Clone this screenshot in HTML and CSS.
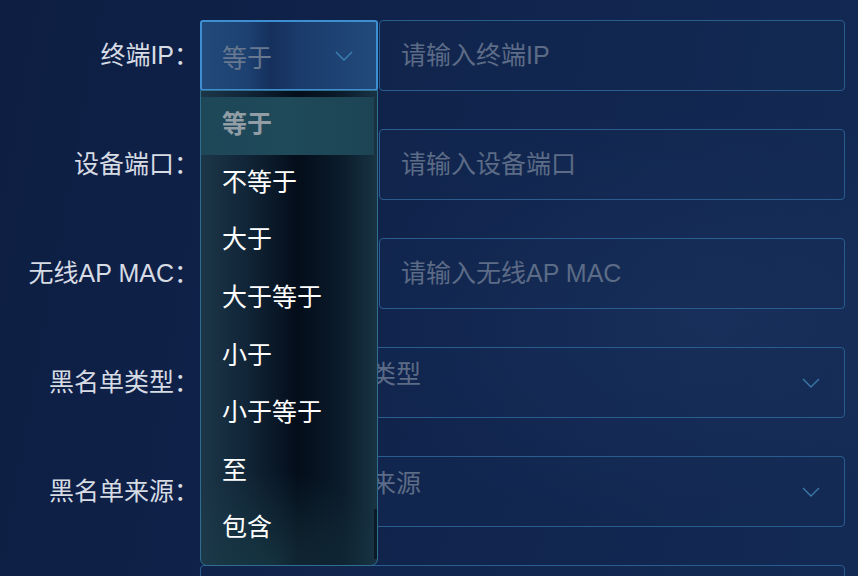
FILE: index.html
```html
<!DOCTYPE html>
<html lang="zh-CN">
<head>
<meta charset="utf-8">
<title>筛选</title>
<link rel="stylesheet" href="styles.css">
</head>
<body>
<form class="form">
  <div class="row">
    <label class="label">终端IP：</label>
    <div class="field">
      <div class="op-select focused">
        <span class="op-value">等于</span>
        <svg class="chev" width="18" height="10" viewBox="0 0 18 10"><path d="M1 1 L9 9 L17 1" fill="none" stroke="currentColor" stroke-width="1.4"/></svg>
        <div class="dropdown">
          <ul class="options">
            <li class="opt active">等于</li>
            <li class="opt">不等于</li>
            <li class="opt">大于</li>
            <li class="opt">大于等于</li>
            <li class="opt">小于</li>
            <li class="opt">小于等于</li>
            <li class="opt">至</li>
            <li class="opt">包含</li>
          </ul>
          <div class="scrollbar"><div class="thumb"></div></div>
        </div>
      </div>
      <div class="input"><span class="ph">请输入终端IP</span></div>
    </div>
  </div>
  <div class="row">
    <label class="label">设备端口：</label>
    <div class="field">
      <div class="op-select"></div>
      <div class="input"><span class="ph">请输入设备端口</span></div>
    </div>
  </div>
  <div class="row">
    <label class="label">无线AP MAC：</label>
    <div class="field">
      <div class="op-select"></div>
      <div class="input"><span class="ph">请输入无线AP MAC</span></div>
    </div>
  </div>
  <div class="row">
    <label class="label">黑名单类型：</label>
    <div class="field">
      <div class="select">
        <span class="ph ph-multi">请选择黑名单类型</span>
        <svg class="chev" width="18" height="10" viewBox="0 0 18 10"><path d="M1 1 L9 9 L17 1" fill="none" stroke="currentColor" stroke-width="1.4"/></svg>
      </div>
    </div>
  </div>
  <div class="row">
    <label class="label">黑名单来源：</label>
    <div class="field">
      <div class="select">
        <span class="ph ph-multi">请选择黑名单来源</span>
        <svg class="chev" width="18" height="10" viewBox="0 0 18 10"><path d="M1 1 L9 9 L17 1" fill="none" stroke="currentColor" stroke-width="1.4"/></svg>
      </div>
    </div>
  </div>
  <div class="row">
    <span class="label"></span>
    <div class="field"><div class="input"></div></div>
  </div>
</form>
</body>
</html>
```

FILE: styles.css
```css
* { box-sizing: border-box; }
html, body { margin: 0; }
body {
  width: 858px;
  height: 576px;
  overflow: hidden;
  font-family: "Liberation Sans", "Noto Sans CJK SC", sans-serif;
  font-size: 25px;
  line-height: 1.2;
  background:
    radial-gradient(ellipse 500px 300px at 700px 320px, rgba(40, 70, 120, 0.25), transparent 70%),
    linear-gradient(100deg, #0d1e42 0%, #10234b 45%, #132a54 100%);
  color: #d5dae3;
}
.form {
  height: 576px;
  overflow: hidden;
  padding-top: 20px;
  display: flex;
  flex-direction: column;
  gap: 38px;
}
.row {
  display: grid;
  grid-template-columns: 200px 645px;
  height: 71px;
  flex: none;
  align-items: center;
}
.label {
  text-align: right;
  padding-right: 1px;
  padding-bottom: 1px;
  color: #d6dbe4;
  white-space: nowrap;
}
.field {
  height: 71px;
  display: flex;
  gap: 1px;
}
.input, .select {
  flex: 1;
  height: 71px;
  border: 1px solid #2a5d8f;
  border-radius: 4px;
  background: rgba(20, 45, 85, 0.25);
  display: flex;
  align-items: center;
  padding-left: 21px;
}
.ph { color: #5c6b86; white-space: nowrap; padding-bottom: 1px; }
.select { justify-content: space-between; padding-right: 24px; padding-left: 20px; }
.ph.ph-multi { padding-bottom: 17px; }
.chev { color: #3a78a8; flex: none; }

.op-select {
  position: relative;
  width: 178px;
  flex: none;
  height: 71px;
  border: 1px solid #2a5d8f;
  border-radius: 3px;
  display: flex;
  align-items: center;
  justify-content: space-between;
  padding: 0 23px 0 21px;
}
.op-select.focused {
  border: 2px solid #3d8fd2;
  padding-left: 20px;
  background: linear-gradient(90deg, #22497a 0%, #1d4272 25%, #15305d 40%, #1a3b6b 55%, #214a7b 100%);
}
.op-value { color: #68788f; padding-top: 4px; }
.op-select .chev { color: #3d7fb2; }

.dropdown {
  position: absolute;
  left: -2px;
  top: 68px;
  width: 178px;
  height: 476px;
  border: 1px solid #2f6e8e;
  border-radius: 0 0 7px 7px;
  background:
    radial-gradient(ellipse 140px 120px at 40% 100%, rgba(30, 70, 80, 0.55), transparent 80%),
    linear-gradient(90deg, #1c3648 0%, #112638 25%, #040d1a 55%, #0b1c2b 80%, #183444 100%);
  display: flex;
  padding-top: 6px;
  overflow: hidden;
  z-index: 5;
}
.options {
  list-style: none;
  margin: 0;
  padding: 0;
  flex: 1;
}
.opt {
  height: 57.6px;
  display: flex;
  align-items: center;
  padding-left: 21px;
  padding-bottom: 3px;
  color: #ffffff;
}
.opt.active {
  background: linear-gradient(90deg, #1e4758 0%, #1f4a5a 50%, #1c4454 100%);
  color: #929da6;
  font-weight: 700;
}
.scrollbar {
  width: 3px;
  margin-bottom: 6px;
  background: #1a3341;
  display: flex;
  flex-direction: column;
  justify-content: flex-end;
}
.thumb {
  height: 50px;
  background: #0b1c26;
}
```
